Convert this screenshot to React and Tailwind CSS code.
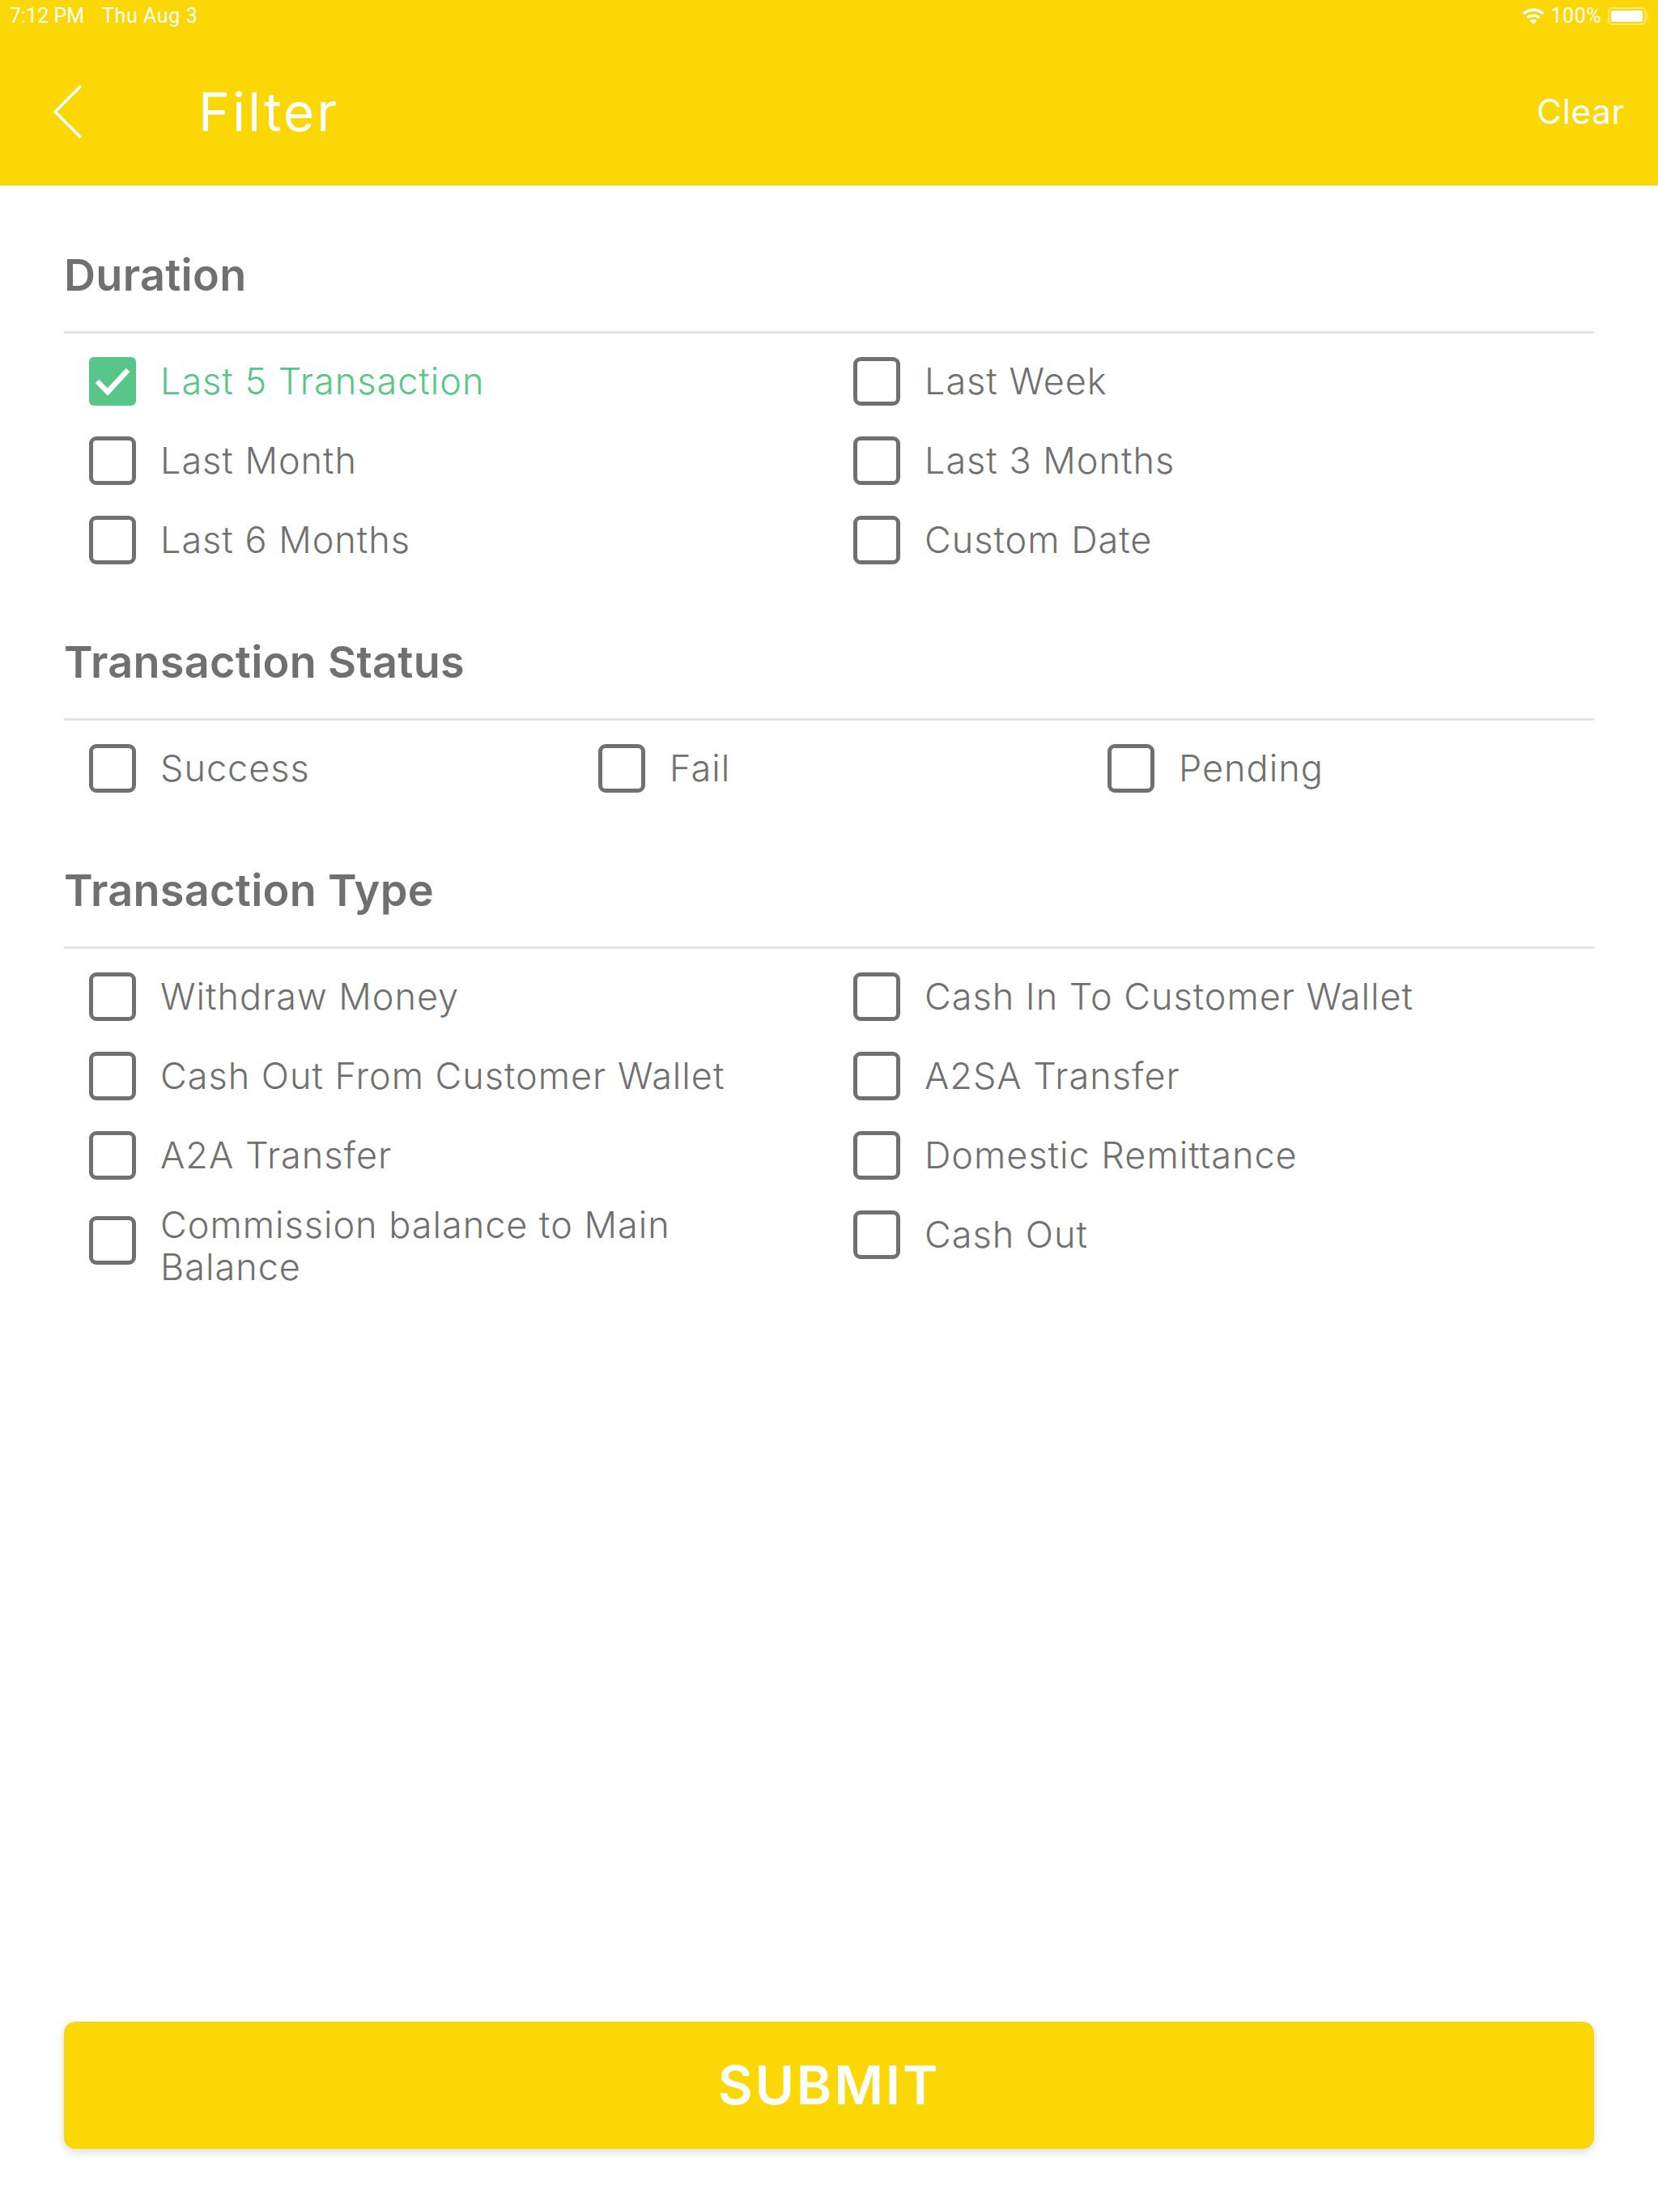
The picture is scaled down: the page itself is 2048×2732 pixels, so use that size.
const font = { fontFamily: "Inter, 'Open Sans', sans-serif" };

function Box({ checked, className = "" }) {
  if (checked) {
    return (
      <span className={`flex h-[60px] w-[58px] shrink-0 items-center justify-center rounded-[6px] bg-[#58c688] ${className}`}>
        <svg width="44" height="36" viewBox="0 0 44 36" fill="none">
          <path d="M3 18 L16 31 L41 4" stroke="#fff" strokeWidth="6.5" />
        </svg>
      </span>
    );
  }
  return <span className={`h-[60px] w-[58px] shrink-0 rounded-[9px] border-[5px] border-[#707070] ${className}`} />;
}

function Option({ label, checked, className = "h-[98px]", boxClassName = "" }) {
  return (
    <div className={`flex items-center gap-[30px] ${className}`}>
      <Box checked={checked} className={boxClassName} />
      <span className={`text-[45px] leading-[52px] tracking-[1px] font-light ${checked ? "text-[#58c688]" : "text-[#707070]"}`}>{label}</span>
    </div>
  );
}

function Section({ title, className, children }) {
  return (
    <section className={className}>
      <h2 className="h-[100px] text-[54px] leading-[62px] tracking-[0.3px] font-semibold text-[#707070]">{title}</h2>
      <div className="h-[3px] bg-[#e2e2e2]" />
      <div className="pl-[31px] pt-[10px]">{children}</div>
    </section>
  );
}

export default function App() {
  return (
    <div className="flex h-[2732px] w-[2048px] flex-col bg-white" style={font}>
      <header className="h-[229px] bg-[#fad705] text-white">
        <div className="flex h-[40px] items-center justify-between pl-[12px] pr-[12px] text-[25px] leading-[40px]" style={{ fontFamily: "Roboto, sans-serif" }}>
          <div className="flex gap-[22px]">
            <span>7:12 PM</span>
            <span className="tracking-[0.6px]">Thu Aug 3</span>
          </div>
          <div className="flex items-center gap-[8px]">
            <svg width="28" height="20" viewBox="0 0 28 20" fill="none">
              <path d="M1.5 7 C8.5 0.5 19.5 0.5 26.5 7" stroke="#fff" strokeWidth="3.5" />
              <path d="M6.5 12 C10.5 8.3 17.5 8.3 21.5 12" stroke="#fff" strokeWidth="3.5" />
              <path d="M14 20 L9.5 15.5 C12 13.5 16 13.5 18.5 15.5 Z" fill="#fff" />
            </svg>
            <span className="tracking-[0.5px]">100%</span>
            <div className="flex items-center">
              <div className="h-[22px] w-[47px] rounded-[5px] border-[2px] border-[#fde978] p-[2px]">
                <div className="h-full w-full rounded-[2px] bg-white" />
              </div>
              <div className="ml-[1px] h-[8px] w-[2px] rounded-r-[2px] bg-[#fde978]" />
            </div>
          </div>
        </div>
        <div className="flex h-[189px] items-center pt-[7px] pl-[66px] pr-[41px]">
          <svg width="36" height="68" viewBox="0 0 36 68" fill="none">
            <path d="M34 2 L2 34 L34 66" stroke="#fff" strokeWidth="3.5" />
          </svg>
          <h1 className="ml-[143px] flex-1 text-[66px] leading-[80px] font-normal tracking-[3px]">Filter</h1>
          <span className="text-[42px] leading-[50px] tracking-[0.7px]">Clear</span>
        </div>
      </header>

      <main className="flex-1 px-[79px]">
        <Section title="Duration" className="pt-[80px]">
          <div className="grid grid-cols-[944px_1fr]">
            <Option label="Last 5 Transaction" checked />
            <Option label="Last Week" />
            <Option label="Last Month" />
            <Option label="Last 3 Months" />
            <Option label="Last 6 Months" />
            <Option label="Custom Date" />
          </div>
        </Section>

        <Section title="Transaction Status" className="pt-[71px]">
          <div className="grid grid-cols-[629px_629px_1fr]">
            <Option label="Success" />
            <Option label="Fail" />
            <Option label="Pending" />
          </div>
        </Section>

        <Section title="Transaction Type" className="pt-[71px]">
          <div className="grid grid-cols-[944px_1fr]">
            <Option label="Withdraw Money" />
            <Option label="Cash In To Customer Wallet" />
            <Option label="Cash Out From Customer Wallet" />
            <Option label="A2SA Transfer" />
            <Option label="A2A Transfer" />
            <Option label="Domestic Remittance" />
            <div className="pr-[120px]">
              <Option label="Commission balance to Main Balance" className="h-[126px]" boxClassName="-mt-[14px]" />
            </div>
            <Option label="Cash Out" />
          </div>
        </Section>
      </main>

      <div className="px-[79px] pb-[78px]">
        <button className="h-[157px] w-full rounded-[14px] bg-[#fad705] text-[66px] font-semibold tracking-[2.8px] text-white shadow-[0_4px_12px_rgba(0,0,0,0.14)]">
          SUBMIT
        </button>
      </div>
    </div>
  );
}
